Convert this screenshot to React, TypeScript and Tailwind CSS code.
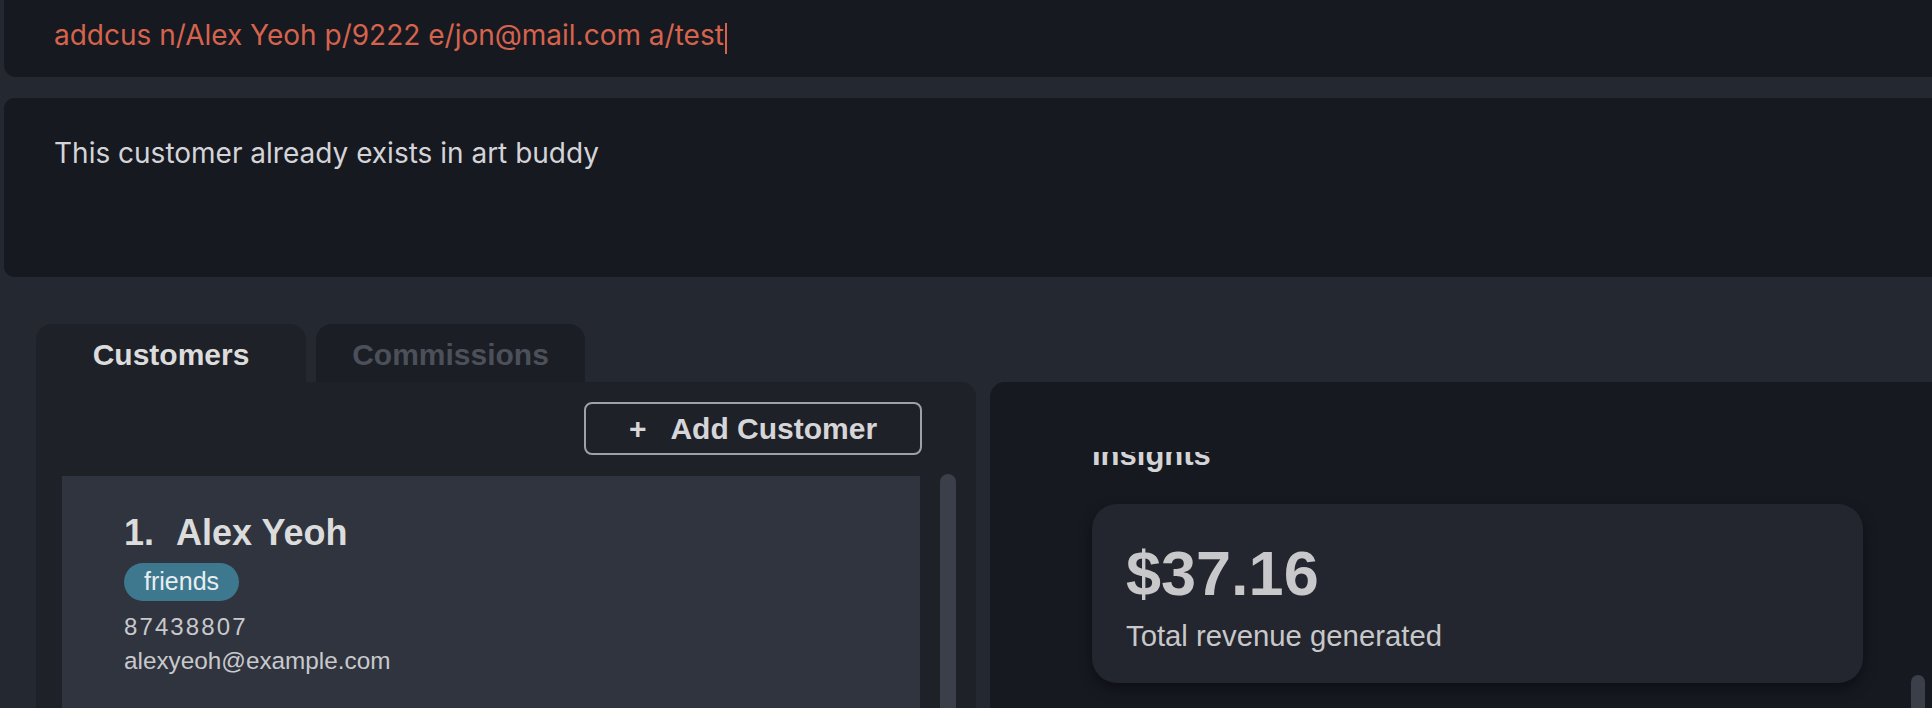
import React from "react";

const sans = "font-['Liberation_Sans',Arial,sans-serif]";
const inter = "font-['Inter','Noto_Sans',sans-serif]";

function CommandBox() {
  return (
    <div className={`ml-[4px] flex h-[77px] shrink-0 items-start rounded-bl-[12px] bg-[#161920] pl-[50px] pt-[18px] ${inter}`}>
      <span className="whitespace-pre text-[28px] leading-[34px] text-[#d6634d]">
        addcus n/Alex Yeoh p/9222 e/jon@mail.com a/test
      </span>
      <span className="ml-[1px] mt-[5px] h-[31px] w-[2px] bg-[#d6634d]" />
    </div>
  );
}

function ResultBox() {
  return (
    <div className={`ml-[4px] mt-[21px] h-[179px] shrink-0 rounded-l-[10px] bg-[#161920] pl-[50px] pt-[38px] ${inter}`}>
      <p className="text-[28px] leading-[34px] text-[#d4d4d8]">
        This customer already exists in art buddy
      </p>
    </div>
  );
}

function CustomerCard() {
  return (
    <div className={`flex-1 bg-[#30343f] pl-[62px] pt-[37px] ${sans}`}>
      <div className="flex items-baseline gap-[22px] text-[36px] font-bold leading-[40px] text-[#dcdcdc]">
        <span>1.</span>
        <span>Alex Yeoh</span>
      </div>
      <div className="mt-[10px] flex">
        <span className="flex h-[38px] items-center rounded-full bg-[#3d788f] px-[20px] text-[25px] text-[#e8eef0]">
          friends
        </span>
      </div>
      <div className="mt-[9px] text-[24px] leading-[34px] tracking-[2.1px] text-[#c8c9cc]">87438807</div>
      <div className="text-[24.3px] leading-[34px] text-[#c8c9cc]">alexyeoh@example.com</div>
    </div>
  );
}

function CustomersPanel() {
  return (
    <div className={`flex w-[940px] shrink-0 flex-col ${sans}`}>
      <div className="flex h-[58px] shrink-0 gap-[10px]">
        <div className="flex w-[270px] items-center justify-center rounded-t-[16px] bg-[#1f2129] pt-[2px] text-[30px] font-bold text-[#dcdcdc]">
          Customers
        </div>
        <div className="flex w-[269px] items-center justify-center rounded-t-[16px] bg-[#1b1e24] pt-[2px] text-[30px] font-bold text-[#4b505a]">
          Commissions
        </div>
      </div>
      <div className="flex flex-1 flex-col rounded-tr-[15px] bg-[#1f2129]">
        <div className="flex justify-end pr-[54px] pt-[20px]">
          <button className="flex h-[53px] w-[338px] items-center justify-center gap-[24px] rounded-[8px] border-2 border-[#9da1a8] text-[30px] font-bold text-[#d6d6d8]">
            <span>+</span>
            <span>Add Customer</span>
          </button>
        </div>
        <div className="mt-[21px] flex flex-1 pl-[26px]">
          <CustomerCard />
          <div className="ml-[20px] mr-[20px] mt-[-2px] w-[16px] rounded-t-full bg-[#3b3f4a]" />
        </div>
      </div>
    </div>
  );
}

function InsightsPanel() {
  return (
    <div className={`ml-[14px] mt-[58px] flex flex-1 rounded-tl-[15px] bg-[#161920] ${sans}`}>
      <div className="flex-1 pl-[102px]">
        <div className="mt-[70px] overflow-hidden">
          <h2 className="mt-[-15px] text-[31px] font-bold leading-[36px] text-[#d4d4d6]">Insights</h2>
        </div>
        <div className="mt-[31px] w-[771px] rounded-[25px] bg-[#23262e] pb-[30px] pl-[34px] pt-[38px] shadow-[0_6px_14px_rgba(0,0,0,0.4)]">
          <div className="text-[63px] font-bold leading-[62px] text-[#c8c8ca]">$37.16</div>
          <div className="mt-[15px] text-[29.3px] leading-[34px] text-[#c8c8ca]">Total revenue generated</div>
        </div>
      </div>
      <div className="mr-[7px] mt-[293px] w-[14px] rounded-t-full bg-[#3b3f4a]" />
    </div>
  );
}

export default function App() {
  return (
    <div className="flex h-[708px] w-[1932px] flex-col overflow-hidden bg-[#242830]">
      <CommandBox />
      <ResultBox />
      <div className="mt-[47px] flex min-h-0 flex-1 pl-[36px]">
        <CustomersPanel />
        <InsightsPanel />
      </div>
    </div>
  );
}
